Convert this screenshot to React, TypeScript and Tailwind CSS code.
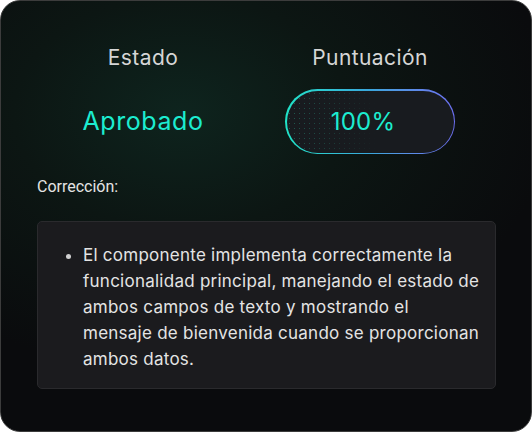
export default function App() {
    return (
        <div className="w-[532px] h-[432px] bg-white">
            <div className="w-full h-full rounded-[20px] border border-[#3c3c3c] overflow-hidden bg-[radial-gradient(ellipse_70%_60%_at_34%_26%,#0e241e_0%,#0c1613_45%,#0a0b0d_100%)] px-[36px] pt-[42px]" style={{ fontFamily: 'Inter, "Noto Sans", sans-serif' }}>
                <div className="grid grid-cols-[212px_212px] gap-x-[15px]">
                    <div className="text-center text-[21px] leading-[30px] text-[#d6d6d6] tracking-[0.4px]">Estado</div>
                    <div className="text-center text-[21px] leading-[30px] text-[#d6d6d6] tracking-[0.4px]">Puntuación</div>
                    <div className="flex items-center justify-center h-[65px] mt-[16px] text-[25px] text-[#1cecd0] tracking-[0.6px]">Aprobado</div>
                    <div className="flex items-center justify-center mt-[16px]">
                        <div className="w-[170px] h-[65px] rounded-full p-[1.5px] bg-gradient-to-r from-[#1fe3c6] via-[#3aa6dc] to-[#6d6ff2]">
                            <div className="relative w-full h-full rounded-full bg-[#181b1f] overflow-hidden flex items-center justify-center">
                                <div className="absolute inset-0 bg-[radial-gradient(#1f5d52_0.8px,transparent_1px)] bg-[length:5px_5px] [mask-image:linear-gradient(to_right,black,transparent_55%)]" />
                                <span className="relative -ml-[14px] text-[24px] text-[#1cecd0] tracking-[0.2px]">100%</span>
                            </div>
                        </div>
                    </div>
                </div>

                <p className="mt-[22px] text-[16px] leading-[22px] text-[#e4e4e4]" style={{ fontFamily: 'Roboto, sans-serif' }}>Corrección:</p>

                <div className="mt-[23px] w-[459px] h-[168px] rounded-[5px] border border-[#2a2a2d] bg-[#1b1b1e] pt-[20px] pl-[31px]">
                    <ul className="list-disc pl-[14px] text-[17px] leading-[26px] tracking-[0.25px] text-[#e4e4e4] marker:text-[#d0d0d0]">
                        <li>
                            El componente implementa correctamente la<br />
                            funcionalidad principal, manejando el estado de<br />
                            ambos campos de texto y mostrando el<br />
                            mensaje de bienvenida cuando se proporcionan<br />
                            ambos datos.
                        </li>
                    </ul>
                </div>
            </div>
        </div>
    );
}
